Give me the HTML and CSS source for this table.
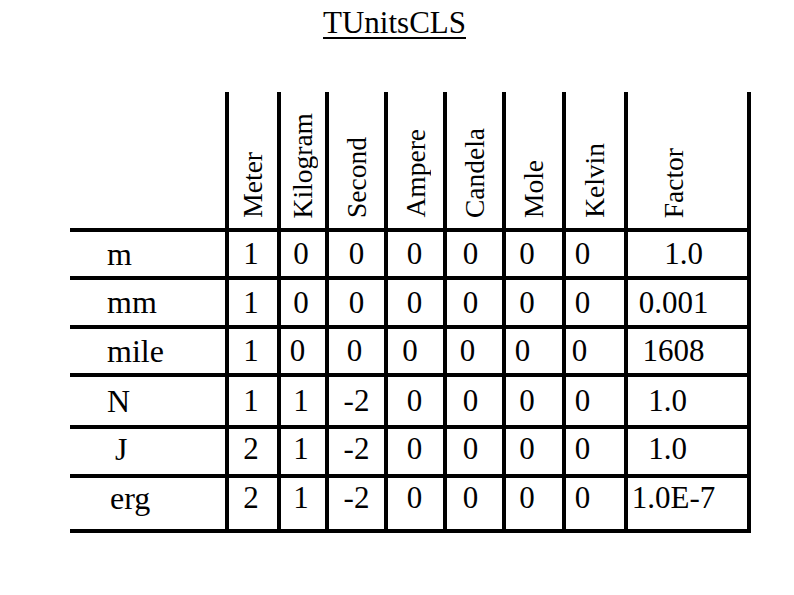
FILE: index.html
```html
<!DOCTYPE html>
<html lang="en">
<head>
<meta charset="utf-8">
<title>TUnitsCLS</title>
<link rel="stylesheet" href="styles.css">
</head>
<body>
<div class="slide">
  <h1 class="title">TUnitsCLS</h1>
  <div class="units">
    <div class="corner"></div>
    <div class="hd c-meter"><span class="vt">Meter</span></div>
    <div class="hd c-kg"><span class="vt">Kilogram</span></div>
    <div class="hd c-sec"><span class="vt">Second</span></div>
    <div class="hd c-amp"><span class="vt">Ampere</span></div>
    <div class="hd c-cd"><span class="vt">Candela</span></div>
    <div class="hd c-mol"><span class="vt">Mole</span></div>
    <div class="hd c-k"><span class="vt">Kelvin</span></div>
    <div class="hd fac"><span class="vt">Factor</span></div>

    <div class="lab">m</div>
    <div class="num c-meter">1</div><div class="num c-kg">0</div><div class="num c-sec">0</div><div class="num c-amp">0</div><div class="num c-cd">0</div><div class="num c-mol">0</div><div class="num c-k">0</div>
    <div class="num fac f-m">1.0</div>

    <div class="lab">mm</div>
    <div class="num c-meter">1</div><div class="num c-kg">0</div><div class="num c-sec">0</div><div class="num c-amp">0</div><div class="num c-cd">0</div><div class="num c-mol">0</div><div class="num c-k">0</div>
    <div class="num fac">0.001</div>

    <div class="lab r-mile">mile</div>
    <div class="num c-meter r-mile">1</div><div class="num c-kg r-mile">0</div><div class="num c-sec r-mile">0</div><div class="num c-amp r-mile">0</div><div class="num c-cd r-mile">0</div><div class="num c-mol r-mile">0</div><div class="num c-k r-mile">0</div>
    <div class="num fac">1608</div>

    <div class="lab">N</div>
    <div class="num c-meter">1</div><div class="num c-kg">1</div><div class="num c-sec">-2</div><div class="num c-amp">0</div><div class="num c-cd">0</div><div class="num c-mol">0</div><div class="num c-k">0</div>
    <div class="num fac f-n">1.0</div>

    <div class="lab lab-j r-j">J</div>
    <div class="num c-meter r-j">2</div><div class="num c-kg r-j">1</div><div class="num c-sec r-j">-2</div><div class="num c-amp r-j">0</div><div class="num c-cd r-j">0</div><div class="num c-mol r-j">0</div><div class="num c-k r-j">0</div>
    <div class="num fac f-n r-j">1.0</div>

    <div class="lab lab-erg r-erg">erg</div>
    <div class="num c-meter r-erg">2</div><div class="num c-kg r-erg">1</div><div class="num c-sec r-erg">-2</div><div class="num c-amp r-erg">0</div><div class="num c-cd r-erg">0</div><div class="num c-mol r-erg">0</div><div class="num c-k r-erg">0</div>
    <div class="num fac r-erg">1.0E-7</div>
  </div>
</div>
</body>
</html>
```
FILE: styles.css
```css
html, body {
  margin: 0;
  padding: 0;
  background: #ffffff;
}

body {
  font-family: "Liberation Serif", "Times New Roman", serif;
  color: #000000;
}

.slide {
  width: 794px;
  height: 595px;
  overflow: hidden;
}

.title {
  margin: 0;
  padding-top: 5px;
  font-size: 31px;
  font-weight: normal;
  line-height: 35px;
  text-align: center;
  padding-right: 5px;
  text-decoration: underline;
  text-decoration-thickness: 2px;
  text-underline-offset: 4px;
}

.units {
  display: grid;
  grid-template-columns: 155px 52px 48px 59px 59px 59px 60px 62px 127px;
  grid-template-rows: 140px 48px 49px 48px 52px 49px 55px;
  width: max-content;
  margin-top: 52px;
  margin-left: 70px;
}

.units > div {
  box-sizing: border-box;
  border-bottom: 4px solid #000;
  display: flex;
}

.corner {
  border-bottom: 4px solid #000;
}

.hd {
  border-left: 4px solid #000;
  justify-content: center;
  align-items: flex-end;
  padding-bottom: 10px;
  font-size: 27.5px;
}

.vt {
  writing-mode: vertical-rl;
  transform: rotate(180deg);
  line-height: normal;
  white-space: nowrap;
}

.lab {
  align-items: center;
  padding-left: 37px;
  font-size: 32px;
}

.lab-j {
  padding-left: 45px;
}

.lab-erg {
  padding-left: 40px;
}

.num {
  border-left: 4px solid #000;
  justify-content: center;
  align-items: center;
  font-size: 31px;
  white-space: nowrap;
}

.fac {
  border-right: 4px solid #000;
  padding-right: 28px;
}

.hd.fac {
  padding-right: 28px;
}

.f-m {
  padding-right: 8px;
}

.f-n {
  padding-right: 40px;
}

/* per-column nudges of the centred values */
.num.c-meter { padding-right: 4px; }
.num.c-kg { padding-right: 4px; }
.num.c-amp { padding-right: 2px; }
.num.c-cd { padding-right: 8px; }
.num.c-mol { padding-right: 14px; }
.num.c-k { padding-right: 25px; }

.num.c-meter.r-mile { padding-right: 4px; }
.num.c-kg.r-mile { padding-right: 11px; }
.num.c-sec.r-mile { padding-right: 4px; }
.num.c-amp.r-mile { padding-right: 11px; }
.num.c-cd.r-mile { padding-right: 14px; }
.num.c-mol.r-mile { padding-right: 23px; }
.num.c-k.r-mile { padding-right: 31px; }

.r-j {
  padding-bottom: 5px;
}

.r-erg {
  padding-bottom: 11px;
}
```
